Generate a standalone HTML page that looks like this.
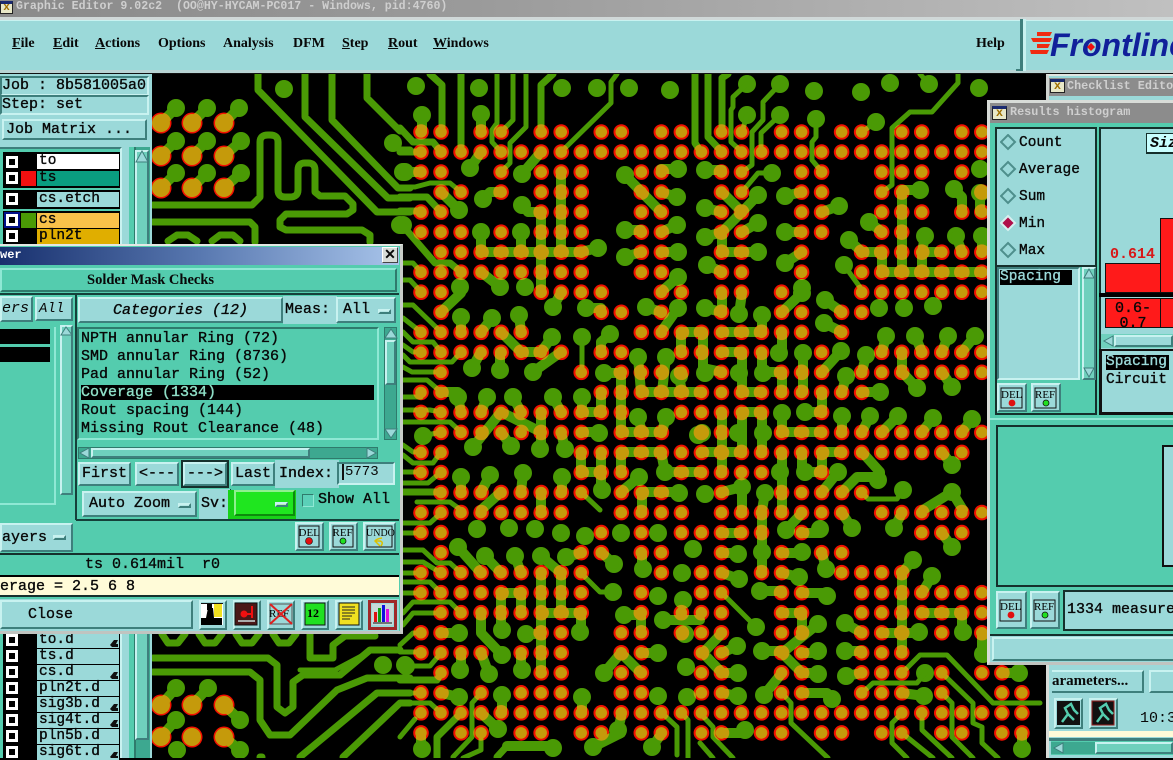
<!DOCTYPE html>
<html><head><meta charset="utf-8">
<style>
html,body{margin:0;padding:0;background:#000;}
body{position:relative;width:1173px;height:758px;overflow:hidden;font-family:"Liberation Mono",monospace;font-size:15px;color:#080808;}
div{position:absolute;box-sizing:border-box;white-space:pre;}
.r{border:2px solid;border-color:#c8f2f0 #3e7f7c #3e7f7c #c8f2f0;background:#9bd9d9;}
.s{border:2px solid;border-color:#3e7f7c #c8f2f0 #c8f2f0 #3e7f7c;}
.t{font-weight:normal;-webkit-text-stroke:.35px;line-height:18px;}
.lab{left:37px;width:82px;height:15px;background:#9bd9d9;-webkit-text-stroke:.35px;font-size:14.5px;line-height:14px;padding-left:2px;}
.cb{left:6px;width:12px;height:12px;border:3px solid #fff;background:#000;}
.m{font-family:"Liberation Serif",serif;font-weight:bold;font-size:14px;top:35px;line-height:18px;}
u{text-decoration:underline;}
</style></head><body>

<!-- PCB -->
<svg style="position:absolute;left:0;top:0" width="1173" height="758" viewBox="0 0 1173 758" fill="none" stroke-linecap="round" stroke-linejoin="round">
<defs>
<path id="p" stroke-dasharray="0 1" d="M0 0H1.1M3 0H4.1M6 0H7.1M9 0H10.1M12 0H13.1M15 0H16.1M18 0H19.1M21 0H22.1M24 0H25.1M27 0H28.1M0 1H28.1M0 2H1.1M4 2h.1M6 2H8.1M11 2H12.1M15 2H16.1M19 2H20.1M23 2H25.1M27 2h.1M1 3H2.1M4 3h.1M6 3H8.1M11 3H12.1M15 3H16.1M19 3H20.1M23 3H24.1M28 3h.1M0 4H1.1M6 4H8.1M11 4H12.1M15 4H16.1M19 4H20.1M23 4H25.1M27 4H28.1M0 5H2.1M4 5h.1M6 5H8.1M11 5H12.1M15 5H16.1M19 5H20.1M23 5H24.1M1 6H8.1M11 6H12.1M15 6H16.1M19 6h.1M22 6H28.1M0 7H8.1M11 7H12.1M15 7H16.1M19 7h.1M22 7H28.1M0 8H1.1M6 8H9.1M12 8H13.1M15 8H16.1M18 8h.1M22 8H28.1M1 9h.1M9 9H10.1M12 9h.1M15 9h.1M18 9H19.1M21 9H22.1M0 10H5.1M11 10H19.1M21 10h.1M0 11H7.1M9 11H10.1M13 11H17.1M20 11h.1M23 11H28.1M1 12h.1M8 12h.1M10 12H13.1M15 12h.1M18 12H20.1M22 12H28.1M0 13H1.1M9 13H22.1M0 14H10.1M13 14H17.1M20 14h.1M1 15H8.1M10 15H12.1M14 15H15.1M18 15H28.1M0 16H1.1M8 16H27.1M0 17H1.1M8 17H10.1M13 17H17.1M20 17h.1M1 18H8.1M10 18H12.1M15 18h.1M18 18H22.1M0 19H7.1M10 19H13.1M15 19H21.1M23 19H28.1M0 20H1.1M9 20h.1M11 20h.1M13 20H17.1M19 20h.1M25 20H27.1M1 21h.1M8 21H9.1M11 21H12.1M15 21h.1M18 21h.1M20 21H21.1M0 22H8.1M12 22h.1M14 22H15.1M17 22H18.1M21 22H24.1M0 23H8.1M11 23h.1M14 23H15.1M18 23H19.1M22 23H28.1M1 24H8.1M11 24h.1M13 24H15.1M18 24H19.1M22 24H28.1M0 25H1.1M6 25H7.1M10 25H11.1M13 25H15.1M18 25H19.1M22 25H24.1M26 25h.1M28 25h.1M0 26H3.1M5 26H7.1M10 26H11.1M14 26H15.1M18 26H19.1M22 26H24.1M1 27h.1M6 27H7.1M10 27H11.1M14 27H15.1M18 27H19.1M22 27H24.1M26 27h.1M28 27H29.1M0 28H1.1M3 28h.1M5 28H7.1M10 28H11.1M14 28H15.1M18 28H19.1M22 28H24.1M26 28h.1M29 28H30.1M0 29H30.1M0 30h.1M2 30H3.1M5 30H6.1M8 30H9.1M11 30H12.1M14 30H15.1M17 30H18.1M20 30H21.1M23 30H24.1M26 30H27.1M29 30H30.1"/>
<g id="reds">
<use href="#p" transform="translate(421 132) scale(20.03)" stroke-width=".78"/>
<path stroke-width="21" d="M161 123h0M192 123h0M224 123h0M161 156h0M192 156h0M224 156h0M161 188h0M192 188h0M224 188h0M161 705h0M192 705h0M224 705h0M161 737h0M192 737h0M224 737h0"/>
</g>
<g id="g">
<!-- big pads -->
<path stroke-width="18" d="M416 86h0M479 88h0M562 88h0M597 88h0M629 88h0M670 90h0M422 115h0M481 114h0M405 172h0M470 168h0M522 174h0M483 199h0M459 210h0M522 205h0M625 175h0M678 169h0M677 197h0M677 225h0M625 230h0M625 257h0M678 252h0M678 277h0M481 232h0M521 232h0M598 248h0M403 225h0M460 287h0M500 287h0M525 287h0M747 84h0M780 84h0M814 91h0M861 92h0M890 83h0M929 84h0M979 88h0M747 115h0M780 115h0M816 119h0M876 122h0M705 170h0M772 173h0M758 195h0M785 196h0M920 190h0M954 189h0M980 193h0M980 169h0M705 208h0M839 206h0M758 223h0M785 232h0M869 222h0M705 237h0M849 240h0M925 236h0M956 236h0M982 236h0M758 252h0M707 265h0M785 263h0M844 265h0M802 288h0M553 307h0M586 308h0M646 307h0M678 308h0M461 317h0M492 318h0M519 315h0M552 337h0M582 337h0M610 334h0M638 357h0M666 357h0M472 368h0M500 370h0M533 372h0M604 373h0M679 376h0M458 397h0M487 397h0M513 397h0M553 397h0M582 397h0M638 417h0M666 417h0M423 436h0M473 447h0M511 446h0M540 449h0M565 449h0M599 433h0M461 477h0M490 475h0M523 473h0M562 477h0M602 490h0M665 472h0M639 477h0M679 493h0M698 435h0M705 308h0M739 314h0M762 315h0M802 293h0M825 300h0M824 323h0M879 308h0M904 308h0M933 306h0M886 336h0M915 336h0M948 336h0M975 336h0M779 353h0M803 353h0M841 351h0M866 355h0M705 373h0M739 373h0M763 373h0M846 376h0M952 387h0M917 388h0M880 392h0M782 413h0M805 412h0M842 416h0M870 416h0M898 416h0M933 418h0M972 419h0M738 433h0M763 433h0M702 433h0M952 465h0M838 472h0M780 472h0M805 472h0M878 480h0M903 490h0M705 494h0M742 487h0M765 493h0M952 492h0M477 529h0M509 528h0M535 529h0M561 533h0M585 536h0M621 533h0M658 533h0M458 547h0M485 556h0M515 556h0M541 556h0M566 557h0M614 564h0M643 569h0M682 573h0M693 549h0M613 592h0M658 596h0M683 600h0M624 615h0M663 620h0M502 630h0M526 634h0M580 632h0M685 634h0M459 633h0M502 655h0M658 653h0M406 666h0M460 670h0M489 674h0M522 670h0M604 673h0M686 667h0M459 697h0M502 695h0M582 697h0M658 696h0M687 697h0M498 729h0M618 730h0M422 749h0M593 747h0M652 747h0M553 748h0M786 530h0M820 529h0M852 528h0M894 528h0M952 547h0M738 554h0M762 552h0M802 552h0M826 569h0M913 560h0M932 576h0M739 579h0M799 577h0M760 591h0M827 596h0M818 624h0M756 627h0M845 623h0M919 632h0M963 632h0M737 646h0M762 651h0M818 651h0M845 651h0M983 654h0M738 673h0M818 674h0M846 676h0M925 673h0M1019 673h0M764 695h0M738 696h0M832 699h0M924 696h0M745 730h0M1022 749h0M284 89h0M176 108h0M207 108h0M239 108h0M176 141h0M207 141h0M241 141h0M176 173h0M207 173h0M241 173h0M393 143h0M403 172h0M400 225h0M383 665h0M405 665h0M176 688h0M208 688h0M176 720h0M240 720h0M177 750h0M240 750h0"/>
<!-- thick stubs -->
<path stroke-width="10" d="M161 123L176 108M192 123L207 108M224 123L239 108M161 156L176 141M192 156L207 141M224 156L241 141M161 188L176 173M192 188L207 173M224 188L241 173M176 688L161 705M208 688L192 705M176 720L161 737M224 705L240 720M224 737L240 750M422 115V132M481 114V132M470 168L481 152M405 172H421M522 174L541 152M483 199L490 192H501M441 192L459 210M522 205L528 212H541M625 175L661 212M625 230H641M625 257L641 252M678 169H661M677 197L661 192M677 225L661 232M678 252H661M678 277L661 292M481 272L500 287M481 232V252M521 232V252M481 252H581L598 248M541 212V292M561 172V252M722 192L742 212L758 195M742 212L722 232M722 232V252H758M705 208L722 212M705 237L722 232M758 223L742 232M705 170H722M785 196L802 192M785 232H802M785 263L802 252M707 265L722 272M839 206L822 212M920 190H902M902 192V272M954 189L962 197V212M980 193V212M869 222L882 232M849 240L862 252H882V272M925 236L922 252V272M922 252H942M956 236L962 252M982 236V252M882 272H982M441 312L461 293M553 307L561 293M586 308H601M646 307L661 312M678 308L661 332M461 317V332M492 318L481 332M519 315L521 332M441 392H458M501 332L521 352H541L552 337M472 368L481 352M500 370V352M533 372L561 352M610 334L601 342V352M604 373H621M621 372V432H661M638 357L641 392M666 357L662 392M642 392H662M662 392H700M679 376L682 392M601 392V412H581M582 397V412M458 397L461 412M487 397L481 412M513 397L521 412M553 397L561 412M473 447L501 412L541 432M501 432L511 446M541 412V449M561 432L565 449M581 432H599M638 417L642 432M666 417L662 432M581 452V472H601M601 452V490M621 452V472M621 452H661L665 472H700M639 477L621 492M461 477V492M490 475L481 492M523 473L521 492M562 477V492M501 492L481 510M541 492V510M642 492V510M642 492H679M681 332V352M681 332H700M722 293V312M742 293L739 314M705 308L722 312M722 332H762M762 315V332M782 312L802 293M825 300L842 312M824 323L842 332M782 332V353M722 352H742V392H762M703 332V368L722 372M762 352V372H782V392M803 353V392M822 392V412H805M841 351L822 372M846 376L842 392M866 355L862 372M880 392H862M882 352L886 336M902 352V372L917 388M915 336L922 352M948 336L942 352M975 336L962 352M942 372L952 387M782 413V432H822M842 416V432M870 416L862 432M898 416L882 432M933 418L922 432M972 419L962 432M722 412V472M702 452H742M742 412H762M742 412V452M762 412V452M782 452V510M802 452V472H822V452M822 452H842M822 492L838 472M842 492L857 477H878M862 452L880 472V480M942 452L952 465M923 510L952 492L963 510M722 492L742 487M765 493L762 510M742 487V510M458 547L481 573M485 556L501 573M515 556L521 573M541 556L561 573M566 557L581 553M602 553L614 564M642 553V569M541 573V673M501 593V630M501 593H521V613M561 573V613M541 613H581V632M481 613V633L502 655M526 634H541M461 653V670M481 653L489 674M521 653V670M624 615H641V633M604 673L621 653L641 673M663 620H700M641 653H658M582 697V713M502 695V713M481 713L498 729M621 733L593 747M622 713L618 730M662 733L652 747M421 733V749M441 693L459 697M441 633H459M762 513V573M722 533H742M786 530L802 513M802 533H820M842 513L852 528M902 513L894 528M942 533L952 547M722 553H738M782 553H802M822 553L826 569M722 573L739 579M782 573L799 577M760 591H782M802 593H827M782 613H802V633M818 624L782 653L802 673M762 651H782M802 653H818M802 673H818M782 673L764 695M802 693H827L832 699M845 623L862 633M845 651H862M846 676L862 673M882 633H919M902 573V653M913 560L902 573M932 576L922 593M922 613H962V632M722 633L703 653L722 673M722 653L737 646M722 673H738M722 693L738 696M722 733H745M902 693L924 696M982 633V654M1002 673H1019M1022 733V749M507 746H553"/>
<!-- traces -->
<path stroke-width="7" d="M430 74L442 85V132M461 74V152M541 132V85L553 74M400 128L413 142H433L441 152M400 152H421M400 197H427L441 212M400 211H421M403 226L435 263H450L461 272M708 74V137L722 152M722 132V78L728 74M695 74V143L701 152M258 74V90L377 212H410M305 74V117L388 198H410M332 74V120L398 188H410M367 74V98L400 131M400 150H410M153 205H252L260 197V142Q260 135 268 135H270Q278 135 278 142V190Q278 197 285 197H290Q298 197 298 190V170Q298 163 305 163H308Q315 163 315 170V192L320 196H345L353 204V210L347 214H286L280 220V227L286 230H362L370 235V242M153 222H250L255 227V242M168 241L177 235H188L197 241M212 241L220 235H233L240 241M162 634L168 643H178L185 634M199 634L205 643H215L222 634M236 634L242 643H252L259 634M273 634L279 643H289L296 634M310 634V658H333V645L345 636H375M153 658H268L277 665V707L285 713L293 707V682L303 675H340L370 650H400M153 672H250L260 680V720L270 735H290L337 690L367 678H410M300 757L377 693H410M343 757L400 703H410M260 757H262M403 492H441M400 680H437L441 673M497 757L507 746M437 737L461 713M437 737V758"/>
<path stroke-width="5" d="M497 74V123L492 130V142L501 152M513 74V120L501 132M526 74V127L510 143V163L501 172M617 74L611 82V103L561 152M400 187H415L430 183H450L461 192M400 263H413L421 272M400 280H410L421 292M403 305H413L441 332M403 318L421 332M403 332L413 342H433L441 352M403 345L413 352H421M403 355L410 362H452L461 352M403 367L412 372H441M403 380H427L441 392M403 397H421M403 410H430L441 412M403 422H450L461 432M423 436L441 432M403 445L413 452H421M403 455L413 463H433L441 452M403 472H421M403 483H428L441 472M417 502H450L461 510M582 337V372M581 492L600 510M747 84L733 97V107L731 110V142L742 152M747 115L742 132M780 84L763 102V120L752 132V165L742 172M780 115L761 133V152M816 119V137L812 142V160L822 172M876 122L862 132M958 74V83L932 112H910L892 128V185L882 192M920 74L929 84M772 173H758L742 192M844 265L862 290M862 492L868 499H897L903 490M403 523H430L441 513M403 533H421M403 550H423L437 563H450L461 573M403 562H423L441 573M403 573H421M403 582H430L441 593M403 593H421M403 613L413 602H450L461 613M403 625L413 613H441M400 645L413 633H421M400 652H421M406 666H430L441 653M400 693H421M400 703H430L441 713M400 737L415 719M581 573L600 592H613M481 693L472 703V737L453 757M481 733V750L463 758M662 713L677 727V755M682 713L688 720V758M722 593L756 627M782 693L791 703V723L828 758M862 693L873 683H917L925 673M902 673L920 655H947L993 703H1040M942 673L973 703V723L982 727V743L998 758M942 693L952 703V737L973 758M922 713V730L952 758M902 713L892 723V743L907 758M902 733L933 758M700 713L713 727V737L733 758M700 743L713 758M300 670H335L367 653"/>
</g>
<mask id="mk" maskUnits="userSpaceOnUse" x="0" y="0" width="1173" height="758"><use href="#reds" stroke="#fff"/></mask>
</defs>
<use href="#reds" stroke="#f21000"/>
<use href="#g" stroke="#4a9a05"/>
<g mask="url(#mk)"><use href="#g" stroke="#c59a0b"/></g>
<use href="#p" transform="translate(421 132) scale(20.03)" stroke="#c59a0b" stroke-width=".58"/>
<path stroke="#c59a0b" stroke-width="18" d="M161 123h0M192 123h0M224 123h0M161 156h0M192 156h0M224 156h0M161 188h0M192 188h0M224 188h0M161 705h0M192 705h0M224 705h0M161 737h0M192 737h0M224 737h0"/>
</svg>

<!-- Title + menu -->
<div style="left:0;top:0;width:1173px;height:17px;background:linear-gradient(90deg,#8a8a8a,#9a9a9a 40%,#c0c0c0);"></div>
<div style="left:16px;top:0;height:15px;font-size:11.6px;font-weight:bold;line-height:14px;color:#cfcfcf;">Graphic Editor 9.02c2  (OO@HY-HYCAM-PC017 - Windows, pid:4760)</div>
<div style="left:0;top:1px;width:13px;height:13px;background:#e8e8c8;border:1px solid #222;border-top:3px solid #1a2a70;color:#a07000;font-size:11px;line-height:9px;text-align:center;font-weight:bold;">x</div>
<div style="left:0;top:17px;width:1173px;height:3px;background:#d0d8d8;"></div>
<div style="left:0;top:20px;width:1173px;height:50px;background:#9bd9d9;border-top:1px solid #c8f2f0;"></div>
<div style="left:0;top:70px;width:1173px;height:4px;background:#b8d4d4;border-bottom:1px solid #111;"></div>
<div class="m" style="left:12px;"><u>F</u>ile</div>
<div class="m" style="left:53px;"><u>E</u>dit</div>
<div class="m" style="left:95px;"><u>A</u>ctions</div>
<div class="m" style="left:158px;">Options</div>
<div class="m" style="left:223px;">Analysis</div>
<div class="m" style="left:293px;">DFM</div>
<div class="m" style="left:342px;"><u>S</u>tep</div>
<div class="m" style="left:388px;"><u>R</u>out</div>
<div class="m" style="left:433px;"><u>W</u>indows</div>
<div class="m" style="left:976px;">Help</div>
<div style="left:1020px;top:19px;width:3px;height:52px;background:#3e7f7c;"></div>
<div style="left:1023px;top:19px;width:3px;height:52px;background:#c8f2f0;"></div>
<div style="left:1016px;top:69px;width:6px;height:2px;background:#3e7f7c;"></div>
<div style="left:1050px;top:25px;height:40px;font:italic bold 32px/40px 'Liberation Sans',sans-serif;color:#10209a;overflow:visible;">Frontline</div>
<svg style="position:absolute;left:1028px;top:30px" width="70" height="30"><path d="M9 2H24L22 6H9zM3 8H24L22 12H5zM9 14H22L20 18H9zM2 20H21L19 24H3z" fill="#f02a10"/><path d="M63 13L67 17L63 21L59 17z" fill="#f01010"/></svg>

<!-- Left panel -->
<div style="left:0;top:74px;width:150px;height:684px;background:#9bd9d9;"></div>
<div style="left:150px;top:74px;width:2px;height:684px;background:#9bd9d9;"></div>
<div class="s t" style="left:0;top:76px;width:149px;height:20px;line-height:16px;">Job : 8b581005a0</div>
<div class="s t" style="left:0;top:95px;width:149px;height:20px;line-height:16px;">Step: set</div>
<div class="r t" style="left:2px;top:119px;width:145px;height:21px;padding-left:2px;line-height:17px;">Job Matrix ...</div>
<div style="left:0;top:147px;width:122px;height:611px;background:#54ccae;border-right:2px solid #c8f2f0;border-top:2px solid #3e7f7c;"></div>
<div style="left:124px;top:147px;width:5px;height:611px;background:#9bd9d9;"></div>
<div style="left:129px;top:147px;width:5px;height:611px;background:#54ccae;"></div>
<div style="left:134px;top:147px;width:16px;height:611px;background:#3da890;border-left:2px solid #2f7a6c;"></div>
<div class="r" style="left:135px;top:150px;width:14px;height:590px;background:#6fd0bd;"></div>
<svg style="position:absolute;left:135px;top:150px" width="14" height="14"><path d="M7 1L13 12H1z" fill="#9bd9d9" stroke="#3e7f7c"/></svg>
<!-- layer rows top -->
<div style="left:3px;top:152px;width:117px;height:36px;background:#000;"></div>
<div style="left:3px;top:190px;width:117px;height:19px;background:#000;"></div>
<div style="left:3px;top:211px;width:117px;height:33px;background:#000;"></div>
<div class="cb" style="top:156px;"></div><div class="cb" style="top:172px;"></div><div class="cb" style="top:193px;"></div>
<div style="left:4px;top:212px;width:16px;height:16px;background:#00108a;"></div><div class="cb" style="top:214px;"></div><div class="cb" style="top:230px;"></div>
<div style="left:21px;top:171px;width:15px;height:15px;background:#f21010;"></div>
<div style="left:21px;top:213px;width:15px;height:15px;background:#4a9a05;"></div>
<div class="lab" style="top:154px;background:#fff;">to</div>
<div class="lab" style="top:171px;background:#0a9d80;">ts</div>
<div class="lab" style="top:192px;">cs.etch</div>
<div class="lab" style="top:213px;background:#f9c24a;">cs</div>
<div class="lab" style="top:229px;height:15px;background:#e0ae00;">pln2t</div>
<!-- layer rows bottom -->
<div style="left:3px;top:632px;width:117px;height:126px;background:#000;"></div>
<div class="cb" style="top:634px;"></div><div class="cb" style="top:650px;"></div><div class="cb" style="top:666px;"></div><div class="cb" style="top:682px;"></div><div class="cb" style="top:698px;"></div><div class="cb" style="top:714px;"></div><div class="cb" style="top:730px;"></div><div class="cb" style="top:746px;"></div>
<div class="lab" style="top:633px;">to.d</div>
<div class="lab" style="top:649px;">ts.d</div>
<div class="lab" style="top:665px;">cs.d</div>
<div class="lab" style="top:681px;">pln2t.d</div>
<div class="lab" style="top:697px;">sig3b.d</div>
<div class="lab" style="top:713px;">sig4t.d</div>
<div class="lab" style="top:729px;">pln5b.d</div>
<div class="lab" style="top:745px;">sig6t.d</div>
<svg style="position:absolute;left:108px;top:636px" width="12" height="122" fill="#111"><path d="M2 9L6 4H10L8 8H10V11H4zM2 41L6 36H10L8 40H10V43H4zM2 73L6 68H10L8 72H10V75H4zM2 89L6 84H10L8 88H10V91H4zM2 121L6 116H10L8 120H10V123H4z"/></svg>

<!-- Solder mask dialog -->
<div style="left:0;top:244px;width:403px;height:390px;background:#54ccae;border-top:2px solid #e4e8e4;border-right:3px solid #c8ccc8;border-bottom:3px solid #c0c4c0;"></div>
<div style="left:0;top:247px;width:399px;height:18px;background:linear-gradient(90deg,#18306e,#5878b0 50%,#a8c4ea);color:#fff;font-weight:bold;font-size:12px;line-height:16px;">wer</div>
<div style="left:382px;top:247px;width:16px;height:16px;background:#d8dcd8;border:1px solid #555;border-color:#fff #444 #444 #fff;font:bold 14px/13px 'Liberation Sans',sans-serif;text-align:center;">✕</div>
<div style="left:0;top:268px;width:397px;height:24px;background:#54ccae;border:2px solid;border-color:#8fe8d4 #2f7a6c #2f7a6c #8fe8d4;font:bold 14.5px/20px 'Liberation Serif',serif;padding-left:85px;">Solder Mask Checks</div>
<div style="left:0;top:293px;width:399px;height:2px;background:#15403a;"></div>
<div style="left:75px;top:293px;width:2px;height:227px;background:#15403a;"></div>
<div style="left:76px;top:519px;width:323px;height:2px;background:#15403a;"></div>
<div class="r" style="left:0;top:296px;width:33px;height:26px;font-style:italic;line-height:22px;">ers</div>
<div class="r" style="left:35px;top:297px;width:38px;height:24px;font-style:italic;line-height:20px;padding-left:2px;font-size:14px;">All</div>
<div class="r t" style="left:78px;top:297px;width:205px;height:26px;font-style:italic;line-height:23px;text-align:center;">Categories (12)</div>
<div style="left:283px;top:296px;width:54px;height:28px;background:#9bd9d9;"></div>
<div class="t" style="left:285px;top:301px;">Meas:</div>
<div class="r t" style="left:336px;top:297px;width:60px;height:26px;line-height:22px;padding-left:5px;">All</div>
<div class="r" style="left:378px;top:309px;width:13px;height:5px;background:#b4e6e4;"></div>
<!-- left list -->
<div style="left:0;top:327px;width:56px;height:178px;border-right:2px solid #8fe8d4;border-bottom:2px solid #8fe8d4;"></div>
<div style="left:0;top:329px;width:50px;height:15px;background:#000;"></div>
<div style="left:0;top:347px;width:50px;height:15px;background:#000;"></div>
<div class="r" style="left:60px;top:325px;width:13px;height:170px;background:#6fd0bd;"></div>
<!-- category list -->
<div style="left:77px;top:327px;width:302px;height:113px;border:2px solid;border-color:#2f7a6c #8fe8d4 #8fe8d4 #2f7a6c;"></div>
<div style="left:81px;top:385px;width:293px;height:15px;background:#000;"></div>
<div class="t" style="left:81px;top:330px;">NPTH annular Ring (72)</div>
<div class="t" style="left:81px;top:348px;">SMD annular Ring (8736)</div>
<div class="t" style="left:81px;top:366px;">Pad annular Ring (52)</div>
<div class="t" style="left:81px;top:384px;color:#8fe0c8;">Coverage (1334)</div>
<div class="t" style="left:81px;top:402px;">Rout spacing (144)</div>
<div class="t" style="left:81px;top:420px;">Missing Rout Clearance (48)</div>
<div style="left:384px;top:327px;width:13px;height:113px;background:#3da890;border:1px solid #2f7a6c;"></div>
<div class="r" style="left:385px;top:340px;width:11px;height:45px;background:#6fd0bd;"></div>
<div style="left:78px;top:447px;width:300px;height:12px;background:#3da890;border:1px solid #2f7a6c;"></div>
<div class="r" style="left:91px;top:448px;width:219px;height:10px;background:#6fd0bd;"></div>
<svg style="position:absolute;left:0;top:0;pointer-events:none" width="410" height="500" fill="#9bd9d9" stroke="#3e7f7c"><path d="M385 338L391 329L397 338zM385 429L391 438L397 429zM89 448L80 453L89 458zM367 448L376 453L367 458zM61 335L66 327L72 335z"/></svg>
<!-- nav -->
<div class="r t" style="left:78px;top:462px;width:53px;height:24px;line-height:20px;padding-left:2px;">First</div>
<div class="r t" style="left:135px;top:462px;width:44px;height:24px;line-height:20px;padding-left:2px;">&lt;---</div>
<div style="left:181px;top:460px;width:48px;height:28px;background:#15302c;"></div>
<div class="r t" style="left:183px;top:462px;width:44px;height:24px;line-height:20px;padding-left:2px;">---&gt;</div>
<div class="r t" style="left:231px;top:462px;width:44px;height:24px;line-height:20px;padding-left:2px;">Last</div>
<div style="left:275px;top:460px;width:64px;height:28px;background:#9bd9d9;"></div>
<div class="t" style="left:279px;top:465px;">Index:</div>
<div class="s" style="left:337px;top:462px;width:58px;height:23px;background:#9bd9d9;font-size:14px;line-height:17px;padding-left:6px;">5773</div>
<div style="left:342px;top:464px;width:2px;height:16px;background:#111;"></div>
<div class="r t" style="left:82px;top:491px;width:115px;height:26px;line-height:22px;padding-left:5px;">Auto Zoom</div>
<div class="r" style="left:178px;top:503px;width:13px;height:5px;background:#b4e6e4;"></div>
<div style="left:199px;top:489px;width:32px;height:30px;background:#9bd9d9;border-right:1px solid #15403a;"></div>
<div class="t" style="left:201px;top:495px;">Sv:</div>
<div style="left:228px;top:490px;width:68px;height:29px;background:#18d018;"></div>
<div class="r" style="left:234px;top:490px;width:61px;height:26px;background:#1fe61f;border-color:#8ff08f #0d8a0d #0d8a0d #8ff08f;"></div>
<div class="r" style="left:275px;top:502px;width:13px;height:5px;background:#b4f0b4;"></div>
<div style="left:302px;top:494px;width:12px;height:13px;background:#5bd0b8;border:1px solid;border-color:#2f7a6c #8fe8d4 #8fe8d4 #2f7a6c;"></div>
<div class="t" style="left:318px;top:491px;">Show All</div>
<div class="r t" style="left:0;top:523px;width:73px;height:29px;line-height:25px;">ayers</div>
<div class="r" style="left:53px;top:535px;width:13px;height:5px;background:#b4e6e4;"></div>
<div style="left:0;top:553px;width:399px;height:2px;background:#15302c;"></div>
<div class="t" style="left:85px;top:556px;">ts 0.614mil  r0</div>
<div style="left:0;top:575px;width:399px;height:2px;background:#000;"></div>
<div class="t" style="left:0;top:577px;width:399px;height:20px;background:#fffbd8;border-bottom:2px solid #15302c;line-height:20px;">erage = 2.5 6 8</div>
<div style="left:0;top:599px;width:399px;height:32px;background:#9bd9d9;"></div>
<div class="r t" style="left:0;top:600px;width:193px;height:29px;line-height:25px;padding-left:26px;">Close</div>
<!-- DEL REF UNDO / icons -->
<div class="r" style="left:295px;top:522px;width:29px;height:29px;"></div>
<div class="r" style="left:329px;top:522px;width:29px;height:29px;"></div>
<div class="r" style="left:363px;top:522px;width:33px;height:29px;"></div>
<div class="r" style="left:199px;top:600px;width:28px;height:30px;"></div>
<div class="r" style="left:233px;top:600px;width:28px;height:30px;"></div>
<div class="r" style="left:267px;top:600px;width:28px;height:30px;"></div>
<div class="r" style="left:301px;top:600px;width:28px;height:30px;"></div>
<div class="r" style="left:335px;top:600px;width:28px;height:30px;"></div>
<div class="r" style="left:368px;top:600px;width:29px;height:30px;border-color:#a02828;border-width:3px;"></div>
<svg style="position:absolute;left:0;top:0;pointer-events:none" width="410" height="640" font-family="'Liberation Serif',serif">
<g fill="none" stroke="#111"><rect x="299" y="526" width="20" height="21"/><rect x="333" y="526" width="20" height="21"/><rect x="367" y="526" width="25" height="21"/></g>
<text x="298.5" y="536" font-size="11">DEL</text><circle cx="309" cy="541" r="3.5" fill="#e01010" stroke="#111" stroke-width=".6"/>
<text x="332.5" y="536" font-size="11">REF</text><circle cx="343" cy="541" r="3" fill="#20e020" stroke="#111" stroke-width=".8"/>
<text x="366" y="536" font-size="10">UNDO</text><path d="M382 538Q376 539 375 541L380 546M375 541H380Q384 542 381 546" fill="none" stroke="#dcc000" stroke-width="1.5"/>
<rect x="201" y="603" width="22" height="22" fill="#fff"/><rect x="214" y="604" width="8" height="13" fill="#f0e020"/><path d="M201 625V618H206L208 608H213L214 618H222V625z" fill="#000"/><rect x="201" y="603" width="22" height="1" fill="#111"/><rect x="207" y="604" width="5" height="6" fill="#000"/>
<rect x="235" y="603" width="22" height="22" fill="#4a1818" stroke="#111"/><circle cx="244" cy="614" r="3.5" fill="#f01010"/><path d="M246 614H252M252 606V618" stroke="#f01010" stroke-width="2"/><rect x="238" y="620" width="17" height="2" fill="#aaa"/>
<rect x="270" y="604" width="22" height="20" fill="#9bd9d9" stroke="#555"/><text x="269" y="617" font-size="11">REF</text><path d="M270 604L292 624M292 604L270 624" stroke="#e02020" stroke-width="2"/>
<rect x="305" y="603" width="20" height="22" fill="#20e020" stroke="#111"/><text x="307" y="617" font-size="12" font-weight="bold">12</text>
<rect x="339" y="603" width="20" height="22" fill="#f0e020" stroke="#111"/><path d="M342 607H355M342 610H355M342 613H355M342 616H352M342 619H350" stroke="#222"/>
<rect x="372" y="604" width="21" height="21" fill="#c8d8d8"/><rect x="374" y="612" width="3" height="10" fill="#e01010"/><rect x="378" y="608" width="3" height="14" fill="#10a010"/><rect x="382" y="605" width="3" height="17" fill="#1010e0"/><rect x="386" y="609" width="3" height="13" fill="#e010e0"/><path d="M373 623H392" stroke="#111"/>
</svg>

<!-- Right: Checklist -->
<div style="left:1046px;top:74px;width:127px;height:30px;background:#9bd9d9;border-top:2px solid #e0e4e0;border-left:3px solid #d0d4d0;"></div>
<div style="left:1049px;top:78px;width:124px;height:18px;background:#8c8c8c;font-size:11.8px;font-weight:bold;line-height:17px;color:#cfcfcf;padding-left:18px;">Checklist Editor</div>
<div style="left:1050px;top:79px;width:15px;height:14px;background:#e8e8c8;border:1px solid #222;border-top:3px solid #1a2a70;color:#a07000;font-size:12px;line-height:9px;text-align:center;font-weight:bold;">x</div>

<!-- Results histogram -->
<div style="left:987px;top:100px;width:186px;height:565px;background:#9bd9d9;border:3px solid #d8dcd8;border-right:0;border-bottom:3px solid #c0c4c0;"></div>
<div style="left:990px;top:103px;width:183px;height:20px;background:#8c8c8c;font-size:11.8px;font-weight:bold;line-height:19px;color:#cfcfcf;padding-left:20px;">Results histogram</div>
<div style="left:992px;top:106px;width:15px;height:14px;background:#e8e8c8;border:1px solid #222;border-top:3px solid #1a2a70;color:#a07000;font-size:12px;line-height:9px;text-align:center;font-weight:bold;">x</div>
<div style="left:990px;top:123px;width:183px;height:295px;background:#54ccae;"></div>
<div style="left:995px;top:127px;width:102px;height:140px;background:#9bd9d9;border:2px solid #15302c;"></div>
<div class="t" style="left:1019px;top:134px;font-size:14.5px;">Count</div>
<div class="t" style="left:1019px;top:161px;font-size:14.5px;">Average</div>
<div class="t" style="left:1019px;top:188px;font-size:14.5px;">Sum</div>
<div class="t" style="left:1019px;top:215px;font-size:14.5px;">Min</div>
<div class="t" style="left:1019px;top:242px;font-size:14.5px;">Max</div>
<svg style="position:absolute;left:1000px;top:134px" width="18" height="128"><g stroke-width="2" fill="#9bd9d9"><path d="M8 1L15 8L8 15L1 8z" stroke="#4e8f8c"/><path d="M8 28L15 35L8 42L1 35z" stroke="#4e8f8c"/><path d="M8 55L15 62L8 69L1 62z" stroke="#4e8f8c"/><path d="M8 82L15 89L8 96L1 89z" stroke="#d8f0f0" fill="#b0104a"/><path d="M8 109L15 116L8 123L1 116z" stroke="#4e8f8c"/></g></svg>
<div style="left:995px;top:265px;width:102px;height:150px;background:#54ccae;border:2px solid #15302c;"></div>
<div style="left:997px;top:267px;width:83px;height:113px;background:#9bd9d9;border:2px solid;border-color:#3e7f7c #c8f2f0 #c8f2f0 #3e7f7c;"></div>
<div class="t" style="left:1000px;top:270px;width:72px;height:15px;background:#000;color:#9bd9d9;line-height:15px;font-size:14.5px;">Spacing</div>
<div class="r" style="left:1082px;top:267px;width:14px;height:113px;background:#6fd0bd;"></div>
<svg style="position:absolute;left:1082px;top:267px" width="14" height="113" fill="#9bd9d9" stroke="#3e7f7c"><path d="M2 11L7 2L12 11zM2 101L7 110L12 101z"/></svg>
<div class="r" style="left:997px;top:383px;width:30px;height:29px;"></div>
<div class="r" style="left:1031px;top:383px;width:30px;height:29px;"></div>
<div style="left:1099px;top:127px;width:74px;height:288px;background:#9bd9d9;border:2px solid #15302c;border-right:0;"></div>
<div style="left:1146px;top:133px;width:27px;height:21px;background:#c8ffff;border:1px solid #15302c;border-right:0;border-bottom:2px solid #15302c;font-style:italic;font-weight:bold;line-height:20px;padding-left:3px;">Size</div>
<div style="left:1110px;top:247px;color:#d81818;font-weight:bold;line-height:16px;">0.614</div>
<div style="left:1105px;top:263px;width:56px;height:30px;background:#ff1a1a;border:1px solid #111;"></div>
<div style="left:1160px;top:218px;width:13px;height:75px;background:#ff1a1a;border:1px solid #111;border-right:0;"></div>
<div style="left:1099px;top:293px;width:74px;height:4px;background:#000;"></div>
<div class="t" style="left:1105px;top:298px;width:56px;height:30px;background:#ff1a1a;border:1px solid #111;line-height:15px;padding-top:2px;text-align:center;overflow:hidden;">0.6-
0.7</div>
<div style="left:1160px;top:298px;width:13px;height:30px;background:#ff1a1a;border:1px solid #111;border-right:0;"></div>
<div style="left:1101px;top:334px;width:72px;height:14px;background:#6fd0bd;"></div>
<div class="r" style="left:1114px;top:335px;width:59px;height:12px;background:#9bd9d9;"></div>
<svg style="position:absolute;left:1102px;top:335px" width="12" height="12" fill="#9bd9d9" stroke="#3e7f7c"><path d="M11 1L2 6L11 11z"/></svg>
<div style="left:1099px;top:349px;width:74px;height:66px;background:#9bd9d9;border:3px solid #111;border-right:0;border-top:2px solid #111;"></div>
<div class="t" style="left:1106px;top:355px;width:63px;height:15px;background:#000;color:#9bd9d9;line-height:15px;font-size:14.5px;">Spacing</div>
<div class="t" style="left:1106px;top:371px;font-size:14.5px;">Circuit</div>
<div style="left:990px;top:418px;width:183px;height:217px;background:#54ccae;border-top:2px solid #8fe8d4;"></div>
<div style="left:996px;top:425px;width:177px;height:162px;background:#54ccae;border:2px solid #15302c;border-right:0;"></div>
<div style="left:1162px;top:445px;width:11px;height:122px;background:#9bd9d9;border:2px solid #111;border-right:0;"></div>
<div class="r" style="left:996px;top:591px;width:31px;height:38px;"></div>
<div class="r" style="left:1030px;top:591px;width:30px;height:38px;"></div>
<div class="s t" style="left:1063px;top:590px;width:110px;height:41px;background:#9bd9d9;border-right:0;line-height:36px;padding-left:2px;border-color:#15302c;overflow:hidden;">1334 measurements</div>
<div style="left:990px;top:634px;width:183px;height:2px;background:#15302c;"></div>
<div class="r" style="left:992px;top:637px;width:181px;height:24px;border-right:0;"></div>
<svg style="position:absolute;left:990px;top:380px" width="80" height="250" font-family="'Liberation Serif',serif">
<g fill="none" stroke="#111"><rect x="11" y="8" width="21" height="20"/><rect x="45" y="8" width="21" height="20"/><rect x="10" y="220" width="21" height="21"/><rect x="44" y="220" width="21" height="21"/></g>
<text x="11" y="18" font-size="11">DEL</text><circle cx="22" cy="23" r="3.4" fill="#e01010"/>
<text x="45" y="18" font-size="11">REF</text><circle cx="56" cy="23" r="3" fill="#20e020" stroke="#111" stroke-width=".8"/>
<text x="10" y="230" font-size="11">DEL</text><circle cx="21" cy="235" r="3.4" fill="#e01010"/>
<text x="44" y="230" font-size="11">REF</text><circle cx="55" cy="235" r="3" fill="#20e020" stroke="#111" stroke-width=".8"/>
</svg>

<!-- Bottom right window -->
<div style="left:1046px;top:665px;width:127px;height:93px;background:#9bd9d9;border-left:3px solid #d8dcd8;"></div>
<div class="r" style="left:1052px;top:670px;width:92px;height:23px;overflow:hidden;font:bold 15px/18px 'Liberation Serif',serif;border-left:0;">arameters...</div>
<div class="r" style="left:1149px;top:670px;width:24px;height:23px;border-right:0;"></div>
<div class="r" style="left:1054px;top:698px;width:29px;height:31px;"></div>
<div class="r" style="left:1089px;top:698px;width:29px;height:31px;"></div>
<svg style="position:absolute;left:1056px;top:700px" width="62" height="28"><rect x="1" y="1" width="23" height="24" fill="#111"/><rect x="36" y="1" width="22" height="24" fill="#111" stroke="#a02020"/><path d="M6 22L12 14L9 8L15 4L18 10L22 14M12 14L18 20M41 22L47 14L44 8L50 4L53 10L57 14M47 14L53 20" stroke="#54ccae" stroke-width="2.5" fill="none"/></svg>
<div style="left:1140px;top:711px;font-size:15px;line-height:16px;">10:3</div>
<div style="left:1049px;top:731px;width:124px;height:6px;background:#fffbd8;"></div>
<div style="left:1049px;top:738px;width:124px;height:3px;background:#3e7f7c;"></div>
<div style="left:1051px;top:741px;width:122px;height:14px;background:#54ccae;"></div>
<div style="left:1051px;top:742px;width:44px;height:12px;background:#3da890;"></div>
<div class="r" style="left:1095px;top:742px;width:78px;height:12px;background:#6fd0bd;"></div>
<svg style="position:absolute;left:1052px;top:742px" width="12" height="12" fill="#9bd9d9" stroke="#3e7f7c"><path d="M11 1L2 6L11 11z"/></svg>
</body></html>
